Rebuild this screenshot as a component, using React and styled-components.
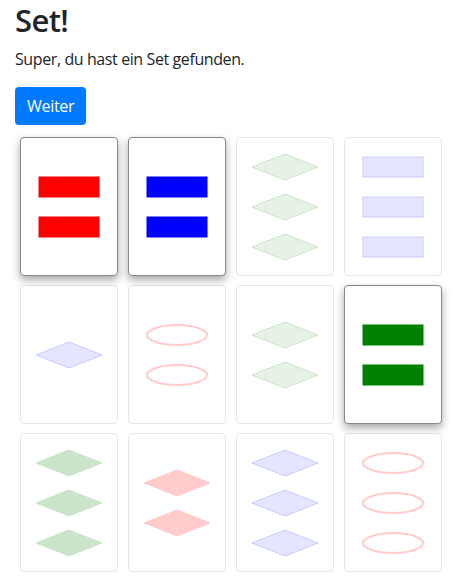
import styled, { createGlobalStyle } from "styled-components";

const GlobalStyle = createGlobalStyle`
  body {
    margin: 0;
    background: #fff;
    color: #212529;
    font-family: "Open Sans", "Noto Sans", Arial, sans-serif;
  }
`;

const Page = styled.div`
  padding: 2px 15px;
`;

const Title = styled.h2`
  font-size: 31px;
  font-weight: 600;
  line-height: 1.2;
  letter-spacing: -0.6px;
  margin: 0 0 8px;
`;

const Text = styled.p`
  font-size: 16px;
  line-height: 24px;
  letter-spacing: -0.4px;
  margin: 0 0 16px;
`;

const Button = styled.button`
  display: block;
  border: none;
  border-radius: 4px;
  padding: 6px 12px;
  background-color: #007bff;
  color: white;
  font-family: inherit;
  font-size: 16px;
  line-height: 26px;
  letter-spacing: -0.3px;
  cursor: pointer;
`;

const Board = styled.div`
  display: grid;
  grid-template-columns: repeat(4, 98px);
  grid-auto-rows: 139px;
  column-gap: 10px;
  row-gap: 9px;
  margin-top: 12px;
  padding-left: 5px;
`;

const Card = styled.div`
  display: flex;
  flex-direction: column;
  justify-content: center;
  align-items: center;
  background: #fff;
  border: 1px solid #888;
  border-radius: 4px;
  opacity: ${(p) => (p.$selected ? 1 : 0.2)};
  box-shadow: ${(p) => (p.$selected ? "0 4px 9px rgba(0,0,0,0.35)" : "none")};
`;

const Slot = styled.div`
  height: 40px;
  display: flex;
  align-items: center;
`;

const colors = { red: "#ff0000", blue: "#0000ff", green: "#008000" };

const Shape = ({ shape, color, fill }) => {
  const c = colors[color];
  const props = {
    fill: fill === "empty" ? "none" : c,
    fillOpacity: fill === "striped" ? 0.5 : 1,
    stroke: c,
    strokeWidth: fill === "empty" ? 2 : 1,
  };
  return (
    <svg width="70" height="30" viewBox="0 0 70 30">
      {shape === "rect" && <rect x="5" y="5" width="60" height="20" {...props} />}
      {shape === "diamond" && <polygon points="2,15 35,2 68,15 35,28" {...props} />}
      {shape === "oval" && <ellipse cx="35" cy="15" rx="30" ry="10" {...props} />}
    </svg>
  );
};

const cards = [
  { n: 2, shape: "rect", color: "red", fill: "solid", selected: true },
  { n: 2, shape: "rect", color: "blue", fill: "solid", selected: true },
  { n: 3, shape: "diamond", color: "green", fill: "striped" },
  { n: 3, shape: "rect", color: "blue", fill: "striped" },
  { n: 1, shape: "diamond", color: "blue", fill: "striped" },
  { n: 2, shape: "oval", color: "red", fill: "empty" },
  { n: 2, shape: "diamond", color: "green", fill: "striped" },
  { n: 2, shape: "rect", color: "green", fill: "solid", selected: true },
  { n: 3, shape: "diamond", color: "green", fill: "solid" },
  { n: 2, shape: "diamond", color: "red", fill: "solid" },
  { n: 3, shape: "diamond", color: "blue", fill: "striped" },
  { n: 3, shape: "oval", color: "red", fill: "empty" },
];

const App = () => {
  return (
    <Page>
      <GlobalStyle />
      <Title>Set!</Title>
      <Text>Super, du hast ein Set gefunden.</Text>
      <Button>Weiter</Button>
      <Board>
        {cards.map((card, i) => (
          <Card key={i} $selected={card.selected}>
            {Array.from({ length: card.n }).map((_, j) => (
              <Slot key={j}>
                <Shape shape={card.shape} color={card.color} fill={card.fill} />
              </Slot>
            ))}
          </Card>
        ))}
      </Board>
    </Page>
  );
};

export default App;
